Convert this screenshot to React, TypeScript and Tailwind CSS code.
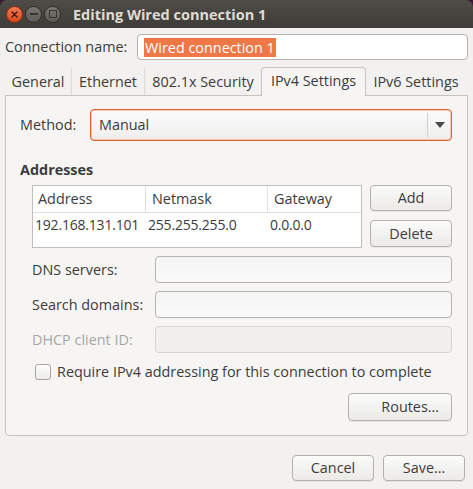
type FieldProps = {
  label: string;
  disabled?: boolean;
};

const font = "font-['Open_Sans','Noto_Sans',sans-serif]";

function TitleButton({ kind }: { kind: "close" | "min" | "max" }) {
  if (kind === "close") {
    return (
      <span className="flex h-[17px] w-[17px] items-center justify-center rounded-full border border-[#8a2a0e] bg-gradient-to-b from-[#f47a4d] to-[#d9481c]">
        <svg width="7" height="7" viewBox="0 0 7 7">
          <path d="M1 1L6 6M6 1L1 6" stroke="#3a1a10" strokeWidth="1.4" strokeLinecap="round" />
        </svg>
      </span>
    );
  }
  return (
    <span className="flex h-[17px] w-[17px] items-center justify-center rounded-full border border-[#2e2d2a] bg-gradient-to-b from-[#7a7872] to-[#5c5a55]">
      {kind === "min" ? (
        <span className="h-[2px] w-[8px] bg-[#36352f]" />
      ) : (
        <span className="h-[8px] w-[8px] border-[1.5px] border-[#36352f]" />
      )}
    </span>
  );
}

function TextInput({ disabled = false, className = "" }: { disabled?: boolean; className?: string }) {
  return (
    <div
      className={`h-[27px] rounded-[4px] border ${
        disabled ? "border-[#d6d3d0] bg-[#f1f0ef]" : "border-[#b6b3af] bg-gradient-to-b from-[#f4f4f4] to-[#fafafa]"
      } ${className}`}
    />
  );
}

function PushButton({ label, className = "" }: { label: string; className?: string }) {
  return (
    <button
      type="button"
      className={`flex items-center justify-center rounded-[4px] border border-[#b4b1ad] bg-gradient-to-b from-[#fbfbfa] to-[#ebeae8] text-[14.4px] text-[#3c3c3c] shadow-[0_1px_0_rgba(0,0,0,0.06)] ${className}`}
    >
      {label}
    </button>
  );
}

function Field({ label, disabled = false }: FieldProps) {
  return (
    <div className="flex h-[27px] items-center">
      <span className={`w-[123px] text-[14.4px] ${disabled ? "text-[#a8a6a3]" : "text-[#3c3c3c]"}`}>{label}</span>
      <TextInput disabled={disabled} className="flex-1" />
    </div>
  );
}

const tabs = ["General", "Ethernet", "802.1x Security", "IPv4 Settings", "IPv6 Settings"];
const tabWidths = ["w-[67px]", "w-[73px]", "w-[116px]", "w-[105px]", "w-[100px]"];

export default function App() {
  return (
    <div className={`h-[489px] w-[473px] overflow-hidden bg-[#3a1a2e] ${font}`}>
      <div className="flex h-[28px] items-center rounded-t-[7px] bg-gradient-to-b from-[#4e4c47] to-[#3d3c38] pl-[6px]">
        <div className="flex gap-[2px]">
          <TitleButton kind="close" />
          <TitleButton kind="min" />
          <TitleButton kind="max" />
        </div>
        <span className="ml-[12px] pt-[1px] text-[14.5px] font-bold text-[#dfdbd2]">Editing Wired connection 1</span>
      </div>

      <div className="flex h-[461px] flex-col bg-[#f2f1f0] px-[5px] text-[#3c3c3c]">
        <div className="mt-[6px] flex h-[26px] items-center">
          <span className="text-[14.4px]">Connection name:</span>
          <div className="ml-auto flex h-[26px] w-[331px] items-center rounded-[4px] border border-[#b6b3af] bg-white pl-[6px]">
            <span className="bg-[#f07746] px-[1px] text-[14.4px] leading-[19px] text-white">Wired connection 1</span>
          </div>
        </div>

        <div className="mt-[8px] flex h-[28px] items-end">
          {tabs.map((tab, i) => {
            const active = tab === "IPv4 Settings";
            return (
              <div
                key={tab}
                className={`${tabWidths[i]} flex items-center justify-center text-[14.4px] ${
                  active
                    ? "relative z-10 h-[29px] rounded-t-[4px] border border-b-0 border-[#c6c3bf] bg-[#f6f5f4] pb-[2px]"
                    : `h-[28px] border-b border-[#c6c3bf] ${i < 2 ? "border-r border-r-[#dcd9d6]" : ""}`
                }`}
              >
                {tab}
              </div>
            );
          })}
          <div className="h-[28px] flex-1 border-b border-[#c6c3bf]" />
        </div>

        <div className="-mt-px flex h-[341px] flex-col rounded-b-[4px] border border-[#c6c3bf] bg-[#f6f5f4] pl-[14px] pr-[15px] pt-[13px]">
          <div className="flex h-[32px] items-center">
            <span className="w-[70px] text-[14.4px]">Method:</span>
            <div className="flex h-[32px] flex-1 items-center rounded-[4px] border border-[#e0622c] bg-gradient-to-b from-[#fbfbfb] to-[#efeeed] pl-[8px] shadow-[inset_0_0_0_1px_rgba(240,119,70,0.35)]">
              <span className="flex-1 text-[14.4px]">Manual</span>
              <div className="flex h-[24px] w-[24px] items-center justify-end border-l border-[#d3d0cc] pr-[6px]">
                <svg width="10" height="6" viewBox="0 0 10 6">
                  <path d="M0 0H10L5 6Z" fill="#4a4a4a" />
                </svg>
              </div>
            </div>
          </div>

          <div className="mt-[20px] text-[14.4px] font-bold leading-[18px]">Addresses</div>

          <div className="mt-[6px] flex pl-[12px]">
            <div className="h-[63px] w-[330px] border border-[#c2bfbb] bg-white text-[14px]">
              <div className="flex h-[27px] items-center border-b border-[#e2e0dd] text-[14.4px]">
                <span className="flex h-full w-[113px] items-center border-r border-[#e2e0dd] pl-[5px]">Address</span>
                <span className="flex h-full w-[122px] items-center border-r border-[#e2e0dd] pl-[6px]">Netmask</span>
                <span className="pl-[6px]">Gateway</span>
              </div>
              <div className="flex h-[22px] items-center whitespace-nowrap tracking-[-0.2px]">
                <span className="w-[115px] pl-[2px]">192.168.131.101</span>
                <span className="w-[122px]">255.255.255.0</span>
                <span>0.0.0.0</span>
              </div>
            </div>
            <div className="ml-auto flex w-[82px] flex-col gap-[9px]">
              <PushButton label="Add" className="h-[26px]" />
              <PushButton label="Delete" className="h-[27px]" />
            </div>
          </div>

          <div className="mt-[8px] flex flex-col gap-[8px] pl-[12px]">
            <Field label="DNS servers:" />
            <Field label="Search domains:" />
            <Field label="DHCP client ID:" disabled />
          </div>

          <div className="mt-[10px] flex h-[18px] items-center pl-[15px]">
            <span className="h-[16px] w-[16px] rounded-[3px] border border-[#a9a6a2] bg-gradient-to-b from-[#fdfdfd] to-[#ecebea]" />
            <span className="ml-[6px] text-[14.4px]">Require IPv4 addressing for this connection to complete</span>
          </div>

          <div className="mt-[12px] flex justify-end">
            <PushButton label="Routes…" className="h-[28px] w-[104px] justify-end pr-[12px]" />
          </div>
        </div>

        <div className="mt-[19px] flex justify-end gap-[9px] pr-[3px]">
          <PushButton label="Cancel" className="h-[26px] w-[82px]" />
          <PushButton label="Save…" className="h-[26px] w-[82px]" />
        </div>
      </div>
    </div>
  );
}
